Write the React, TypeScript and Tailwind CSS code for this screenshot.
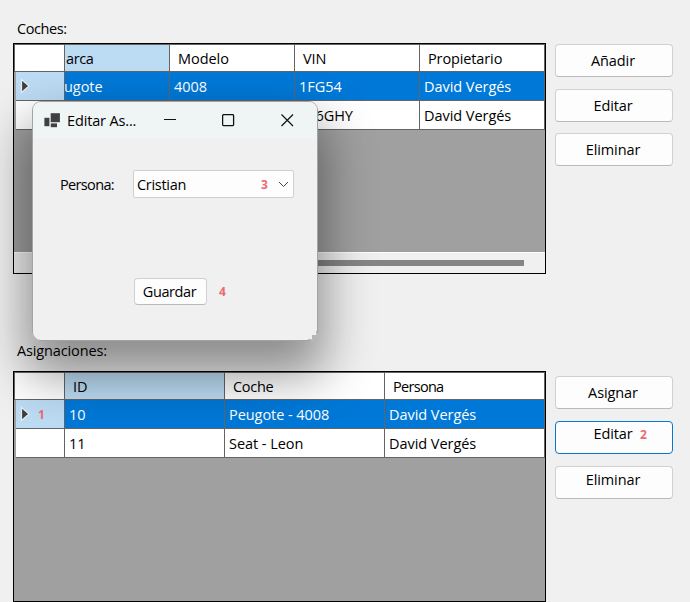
import type { ReactNode } from "react";

type Column = { title: string; width: string; active?: boolean; tracking?: string };
type Row = { cells: string[]; selected?: boolean; badge?: string };

function Badge({ children }: { children: ReactNode }) {
  return (
    <span className="font-['Open_Sans',sans-serif] text-[12px] leading-none font-bold tracking-normal text-[#ec6a74]">
      {children}
    </span>
  );
}

function Button({ children, focused, raised, badge }: { children: string; focused?: boolean; raised?: boolean; badge?: string }) {
  return (
    <button
      className={`relative flex h-[33px] w-[118px] items-center justify-center rounded-[4px] border bg-[#fdfdfd] pr-[2px] tracking-[-0.1px] ${
        focused ? "border-[#0078d4] pb-[8px]" : "border-[#d0d0d0] border-b-[#bababa]"
      } ${raised ? "pb-[6px]" : ""}`}
    >
      {children}
      {badge && (
        <span className="absolute top-[7px] left-[84px] flex">
          <Badge>{badge}</Badge>
        </span>
      )}
    </button>
  );
}

function Grid({ columns, rows, scrolled }: { columns: Column[]; rows: Row[]; scrolled?: boolean }) {
  return (
    <div className="flex h-[231px] w-[533px] flex-col border border-black bg-[#a0a0a0]">
      <div className="flex h-[28px] border-t border-b border-l border-[#646464] bg-white">
        <div className="w-[50px] shrink-0 border-r border-[#646464]" />
        {columns.map((c, i) => (
          <div
            key={c.title}
            className={`flex shrink-0 items-center overflow-hidden border-r border-[#646464] pt-[2px] ${c.width} ${
              c.tracking ?? ""
            } ${c.active ? "bg-[#bcdcf4]" : ""} ${scrolled && i === 0 ? "pl-px" : "pl-[8px]"}`}
          >
            {c.title}
          </div>
        ))}
      </div>
      {rows.map((r, n) => (
        <div key={n} className="ml-[2px] flex h-[29px] border-b border-[#646464] bg-white">
          <div
            className={`flex w-[49px] shrink-0 items-center border-r border-[#646464] pl-[4px] ${
              r.selected ? "bg-[#bcdcf4]" : ""
            }`}
          >
            {r.selected && (
              <svg width="11" height="16" viewBox="0 0 11 16">
                <path d="M1.5 1.5 L9 8 L1.5 14.5 Z" fill="#404040" stroke="#e8eef2" strokeWidth="1.2" />
              </svg>
            )}
            {r.badge && (
              <span className="flex pt-px pl-[7px]">
                <Badge>{r.badge}</Badge>
              </span>
            )}
          </div>
          {r.cells.map((t, i) => (
            <div
              key={i}
              className={`flex shrink-0 items-center overflow-hidden border-r border-[#646464] pt-[2px] ${columns[i].width} ${
                r.selected ? "bg-[#0078d7] text-white" : ""
              } ${scrolled && i === 0 ? "-indent-px pl-0" : "pl-[4px]"}`}
            >
              {t}
            </div>
          ))}
        </div>
      ))}
      {scrolled && (
        <div className="mt-auto flex h-[21px] items-center border-t border-white bg-[#f0f0f0]">
          <div className="ml-[18px] h-[6px] w-[492px] bg-[#858585]" />
        </div>
      )}
    </div>
  );
}

function EditDialog() {
  return (
    <div className="absolute top-[101px] left-[32px] flex h-[240px] w-[286px] flex-col overflow-hidden rounded-[9px] border border-[#a3a3a3] bg-[#f0f0f0]">
      <div className="flex h-[37px] shrink-0 items-center bg-[#eff4f5] pl-[11px]">
        <svg width="17" height="15" viewBox="0 0 17 15" fill="#404040">
          <rect x="6.7" y="0.2" width="9.2" height="9" />
          <rect x="0.4" y="4.8" width="5" height="8.4" />
          <rect x="6.8" y="10.4" width="6.2" height="3.8" />
        </svg>
        <span className="w-[103px] pl-[6px] tracking-[-0.15px]">Editar As...</span>
        <svg width="13" height="13" viewBox="0 0 13 13" stroke="#111">
          <path d="M0 5.5h12" />
        </svg>
        <svg className="ml-[45px]" width="13" height="13" viewBox="0 0 13 13" fill="none" stroke="#111" strokeWidth="1.3">
          <rect x="0.6" y="0.6" width="11" height="11" rx="1.2" />
        </svg>
        <svg className="ml-[46px]" width="13" height="13" viewBox="0 0 13 13" stroke="#111" strokeWidth="1.2">
          <path d="M0.5 0.5l11.5 11.5M12 0.5l-11.5 11.5" />
        </svg>
      </div>
      <div className="mt-[31px] flex h-[28px] items-center pl-[27px]">
        <span className="w-[73px] pt-px tracking-[-0.65px]">Persona:</span>
        <div className="flex h-[28px] w-[161px] items-center rounded-[2px] border border-[#cfcfcf] bg-[#fdfdfd] pl-[3px]">
          <span className="w-[124px] pt-px tracking-[-0.3px]">Cristian</span>
          <span className="flex pt-[2px]">
            <Badge>3</Badge>
          </span>
          <svg className="ml-[10px]" width="11" height="7" viewBox="0 0 11 7" fill="none" stroke="#444">
            <path d="M1 1l4.5 4.5L10 1" />
          </svg>
        </div>
      </div>
      <div className="mt-[80px] flex items-center pl-[101px]">
        <button className="flex h-[27px] w-[73px] items-center justify-center rounded-[4px] border border-[#d0d0d0] border-b-[#bababa] bg-[#fdfdfd] pr-[2px] tracking-[-0.4px]">
          Guardar
        </button>
        <span className="flex pt-px pl-[12px]">
          <Badge>4</Badge>
        </span>
      </div>
      <svg className="absolute right-0 bottom-0" width="9" height="9" viewBox="0 0 9 9" fill="#b4b4b4">
        <path d="M8 0h1v9H0V8h4V4h4z" />
      </svg>
    </div>
  );
}

export default function App() {
  return (
    <div className="relative h-[602px] w-[690px] overflow-hidden bg-[#f0f0f0] font-['Open_Sans','Noto_Sans',sans-serif] text-[14.5px] leading-[20px] tracking-[-0.05px] whitespace-nowrap text-black">
      <div className="flex h-[43px] items-end pb-[4px] pl-[17px] tracking-[-0.4px]">Coches:</div>
      <div className="flex gap-[9px] pl-[13px]">
        <Grid
          scrolled
          columns={[
            { title: "arca", width: "w-[105px]", active: true, tracking: "tracking-[-0.4px]" },
            { title: "Modelo", width: "w-[125px]" },
            { title: "VIN", width: "w-[125px]" },
            { title: "Propietario", width: "w-[125px]", tracking: "tracking-[-0.12px]" },
          ]}
          rows={[
            { cells: ["ugote", "4008", "1FG54", "David Vergés"], selected: true },
            { cells: ["", "", "456GHY", "David Vergés"] },
          ]}
        />
        <div className="flex flex-col pt-px">
          <Button>Añadir</Button>
          <div className="h-[12px]" />
          <Button>Editar</Button>
          <div className="h-[11px]" />
          <Button>Eliminar</Button>
        </div>
      </div>
      <div className="flex h-[97px] items-end pb-[10px] pl-[17px] tracking-[-0.14px]">Asignaciones:</div>
      <div className="flex gap-[9px] pl-[13px]">
        <Grid
          columns={[
            { title: "ID", width: "w-[160px]", active: true },
            { title: "Coche", width: "w-[160px]", tracking: "tracking-[-0.3px]" },
            { title: "Persona", width: "w-[160px]", tracking: "tracking-[-0.7px]" },
          ]}
          rows={[
            { cells: ["10", "Peugote - 4008", "David Vergés"], selected: true, badge: "1" },
            { cells: ["11", "Seat - Leon", "David Vergés"] },
          ]}
        />
        <div className="flex flex-col gap-[12px] pt-[5px]">
          <Button>Asignar</Button>
          <Button focused badge="2">Editar</Button>
          <Button raised>Eliminar</Button>
        </div>
      </div>
      <div className="absolute top-[101px] left-[32px] h-[240px] w-[286px] rounded-[9px] shadow-[0_28px_50px_6px_rgba(0,0,0,0.42)]" />
      <EditDialog />
    </div>
  );
}
